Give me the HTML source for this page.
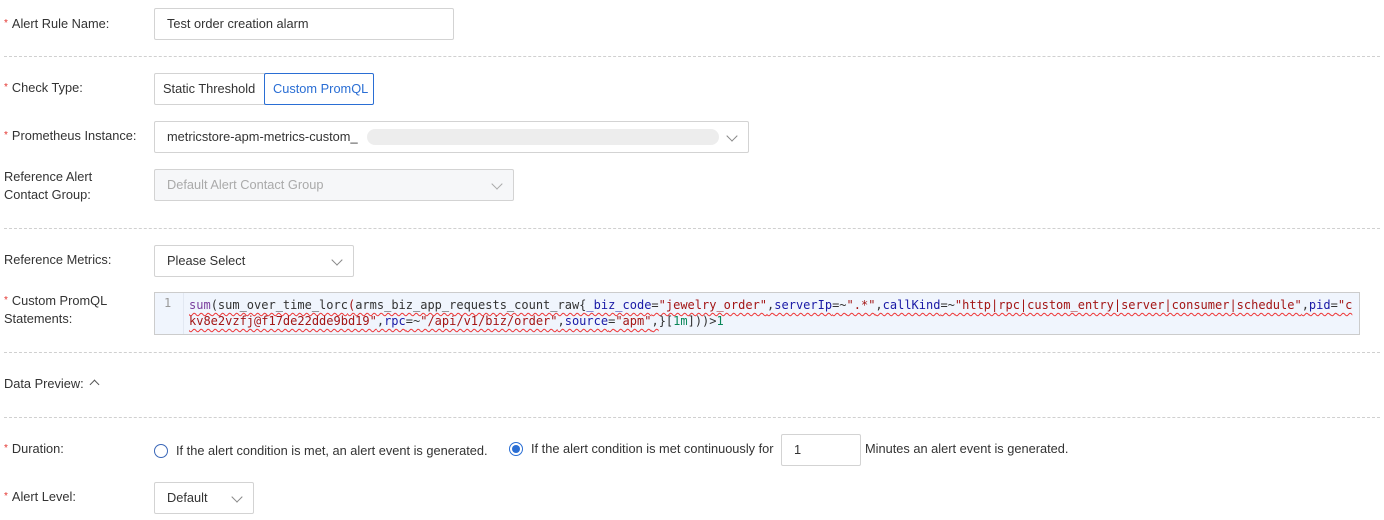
<!DOCTYPE html>
<html><head><meta charset="utf-8"><style>
*{box-sizing:border-box;margin:0;padding:0}
body{width:1384px;height:520px;background:#fff;font-family:"Liberation Sans",sans-serif;font-size:12.8px;color:#333;position:relative;overflow:hidden}
.a{position:absolute}
.lbl{position:absolute;left:4px;line-height:18px;color:#333}
.lbl b{color:#e3342f;font-weight:normal;margin-right:4px;font-size:10px;vertical-align:top}
.inp{position:absolute;border:1px solid #d3d3d3;border-radius:2px;background:#fff;line-height:30px;padding-left:12px;color:#333}
.sep{position:absolute;left:4px;right:4px;border-top:1px dashed #d0d0d0;height:0}
.chev{position:absolute;top:10px;width:8px;height:8px;border-right:1px solid #888;border-bottom:1px solid #888;transform:rotate(45deg)}
.code{font-family:"DejaVu Sans Mono",monospace;font-size:12px;line-height:16px;white-space:pre}
.k{color:#7a3e9d}.s{color:#a31515}.p{color:#1a1aa6}.n{color:#098658}
.w{text-decoration:underline wavy #e33;text-underline-offset:3px;text-decoration-thickness:1px}
</style></head><body>
<div class="lbl" style="top:15px"><b>*</b>Alert Rule Name:</div>
<div class="inp" style="left:154px;top:8px;width:300px;height:32px">Test order creation alarm</div>
<div class="sep" style="top:56px"></div>

<div class="lbl" style="top:79px"><b>*</b>Check Type:</div>
<div class="inp" style="left:154px;top:73px;width:111px;height:32px;border-radius:2px 0 0 2px;padding-left:8px">Static Threshold</div>
<div class="inp" style="left:264px;top:73px;width:110px;height:32px;border-color:#2a6ed4;color:#2a6ed4;padding-left:8px">Custom PromQL</div>

<div class="lbl" style="top:127px"><b>*</b>Prometheus Instance:</div>
<div class="inp" style="left:154px;top:121px;width:595px;height:32px">metricstore-apm-metrics-custom_<div class="a" style="left:212px;top:7px;width:352px;height:16px;background:#ededed;border-radius:8px"></div><div class="chev" style="right:12px"></div></div>

<div class="lbl" style="top:168px">Reference Alert<br>Contact Group:</div>
<div class="inp" style="left:154px;top:169px;width:360px;height:32px;background:#f6f7f9;color:#aaa">Default Alert Contact Group<div class="chev" style="right:12px;border-color:#aaa"></div></div>
<div class="sep" style="top:228px"></div>

<div class="lbl" style="top:251px">Reference Metrics:</div>
<div class="inp" style="left:154px;top:245px;width:200px;height:32px">Please Select<div class="chev" style="right:12px"></div></div>

<div class="lbl" style="top:292px"><b>*</b>Custom PromQL<br>Statements:</div>
<div class="a" style="left:154px;top:292px;width:1206px;height:43px;border:1px solid #ccc;background:#f0f5fd"></div>
<div class="a" style="left:155px;top:293px;width:29px;height:41px;background:#f0f5fd;border-right:1px solid #e2e8f2;color:#999;font-family:'DejaVu Sans Mono',monospace;font-size:12px;padding:3px 0 0 9px">1</div>
<div class="a code" style="left:189px;top:297px"><span class="w"><span class="k">sum</span>(sum_over_time_lorc<span class="s">(</span>arms_biz_app_requests_count_raw{<span class="p">_biz_code</span>=<span class="s">"jewelry_order"</span>,<span class="p">serverIp</span>=~<span class="s">".*"</span>,<span class="p">callKind</span>=~<span class="s">"http|rpc|custom_entry|server|consumer|schedule"</span>,<span class="p">pid</span>=<span class="s">"c</span></span>
<span class="w"><span class="s">kv8e2vzfj@f17de22dde9bd19"</span>,<span class="p">rpc</span>=~<span class="s">"/api/v1/biz/order"</span>,<span class="p">source</span>=<span class="s">"apm"</span>,</span>}[<span class="n">1m</span>]))&gt;<span class="n">1</span></div>
<div class="sep" style="top:352px"></div>

<div class="lbl" style="top:375px">Data Preview:</div>
<div class="a" style="left:91px;top:381px;width:7px;height:7px;border-left:1px solid #555;border-top:1px solid #555;transform:rotate(45deg)"></div>
<div class="sep" style="top:417px"></div>

<div class="lbl" style="top:440px"><b>*</b>Duration:</div>
<div class="a" style="left:154px;top:444px;width:14px;height:14px;border:1px solid #3a67b8;border-radius:50%"></div>
<div class="a" style="left:176px;top:442px;line-height:18px">If the alert condition is met, an alert event is generated.</div>
<div class="a" style="left:509px;top:442px;width:14px;height:14px;border:1px solid #2a6ed4;border-radius:50%"><div class="a" style="left:2px;top:2px;width:8px;height:8px;background:#2a6ed4;border-radius:50%"></div></div>
<div class="a" style="left:531px;top:440px;line-height:18px">If the alert condition is met continuously for</div>
<div class="inp" style="left:781px;top:434px;width:80px;height:32px">1</div>
<div class="a" style="left:865px;top:440px;line-height:18px">Minutes an alert event is generated.</div>

<div class="lbl" style="top:488px"><b>*</b>Alert Level:</div>
<div class="inp" style="left:154px;top:482px;width:100px;height:32px">Default<div class="chev" style="right:12px"></div></div>
</body></html>
